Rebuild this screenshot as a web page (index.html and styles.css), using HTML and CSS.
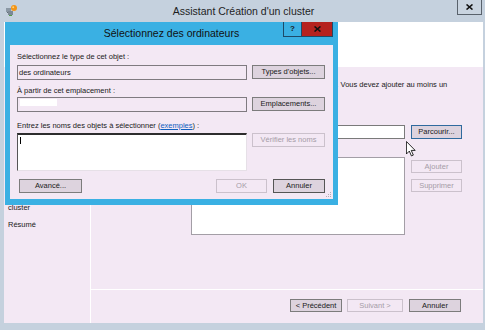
FILE: index.html
```html
<!DOCTYPE html>
<html lang="fr">
<head>
  <meta charset="UTF-8" />
  <meta name="viewport" content="width=device-width, initial-scale=1" />
  <title>Assistant Création d'un cluster</title>
  <link rel="stylesheet" href="styles.css">
</head>
<body>
  <div class="wizard">
    <div class="titlebar">
      <svg class="app-icon" width="12" height="12" viewBox="0 0 12 12">
        <rect x="0" y="4" width="5" height="4" fill="#8b98a5"/>
        <rect x="1" y="8" width="3" height="1" fill="#5f6b76"/>
        <rect x="2" y="7" width="5" height="4" fill="#7c8995"/>
        <rect x="3" y="11" width="3" height="1" fill="#4f9a4a"/>
        <circle cx="8" cy="4" r="3" fill="#f39416"/>
        <circle cx="7.2" cy="3.2" r="1" fill="#ffd27a"/>
      </svg>
      <span class="titlebar-text">Assistant Création d'un cluster</span>
      <button class="win-close" type="button" aria-label="Fermer">
        <svg width="7" height="6" viewBox="0 0 7 6"><path d="M0.5 0.5 L6.5 5.5 M6.5 0.5 L0.5 5.5" stroke="#111" stroke-width="1.6"/></svg>
      </button>
    </div>

    <div class="wizard-client">
      <div class="wizard-header">
        <h2>Sélectionner des serveurs</h2>
      </div>
      <div class="wizard-main">
        <ul class="steps">
          <li>Avant de commencer</li>
          <li class="current">Sélectionner des serveurs</li>
          <li>Avertissement de validation</li>
          <li>Point d'accès pour l'administration du cluster</li>
          <li>Confirmation</li>
          <li>Création du nouveau cluster</li>
          <li>Résumé</li>
        </ul>
        <div class="page">
          <div class="page-content">
            <p class="intro">Ajoutez les noms de tous les serveurs qui doivent faire partie du cluster. Vous devez ajouter au moins un serveur.</p>
            <label class="field-label" for="server">Entrez le nom du serveur :</label>
            <input class="field" id="server" type="text" />
            <button class="focused" type="button">Parcourir...</button>
            <span class="field-label list-label">Serveurs sélectionnés :</span>
            <div class="listbox"></div>
            <div class="list-actions">
              <button type="button" disabled>Ajouter</button>
              <button type="button" disabled>Supprimer</button>
            </div>
          </div>
          <div class="page-footer">
            <button class="btn-prev" type="button">&lt; Précédent</button>
            <button class="btn-next" type="button" disabled>Suivant &gt;</button>
            <button class="btn-cancel" type="button">Annuler</button>
          </div>
        </div>
      </div>
    </div>

    <div class="dialog">
      <div class="dialog-title">
        <span></span>
        <h1>Sélectionnez des ordinateurs</h1>
        <div class="title-buttons">
          <button class="help-btn" type="button">?</button>
          <button class="close-btn" type="button" aria-label="Fermer">
            <svg width="7" height="6" viewBox="0 0 7 6"><path d="M0.5 0.5 L6.5 5.5 M6.5 0.5 L0.5 5.5" stroke="#111" stroke-width="1.6"/></svg>
          </button>
        </div>
      </div>
      <div class="dialog-client">
        <div class="dlg-label first">Sélectionnez le type de cet objet :</div>
        <div class="ro-field">des ordinateurs</div>
        <button type="button">Types d'objets...</button>

        <div class="dlg-label">À partir de cet emplacement :</div>
        <div class="ro-field"><span class="redacted"></span></div>
        <button type="button">Emplacements...</button>

        <div class="dlg-label names">Entrez les noms des objets à sélectionner (<a href="#">exemples</a>) :</div>
        <div class="namebox"></div>
        <button class="check-btn" type="button" disabled>Vérifier les noms</button>

        <div class="dlg-actions">
          <button class="btn-advanced" type="button">Avancé...</button>
          <button class="btn-ok" type="button" disabled>OK</button>
          <button class="btn-dlg-cancel" type="button">Annuler</button>
        </div>

        <svg class="grip" width="6" height="6" viewBox="0 0 6 6">
          <rect x="4" y="0" width="1" height="1" fill="#b4acb6"/>
          <rect x="2" y="2" width="1" height="1" fill="#b4acb6"/>
          <rect x="4" y="2" width="1" height="1" fill="#b4acb6"/>
          <rect x="0" y="4" width="1" height="1" fill="#b4acb6"/>
          <rect x="2" y="4" width="1" height="1" fill="#b4acb6"/>
          <rect x="4" y="4" width="1" height="1" fill="#b4acb6"/>
        </svg>
      </div>
    </div>

    <svg class="cursor" width="10" height="16" viewBox="0 0 12 19">
      <path d="M0.5 0.5 V15.5 L4 12 L6.5 17.8 L8.8 16.8 L6.3 11.2 H11 Z" fill="#fff" stroke="#000" stroke-width="1"/>
    </svg>
  </div>
</body>
</html>
```

FILE: styles.css
```css
* { box-sizing: border-box; }
body { margin: 0; font-family: "Liberation Sans", Arial, sans-serif; font-size: 7.5px; color: #1a1a1a; overflow: hidden; }
button { font: inherit; color: inherit; margin: 0; padding: 0; height: 14px; line-height: 12px; background: #ddd3de; border: 1px solid #7c7c7c; }
button:disabled { background: transparent; border-color: #cbc1cc; color: #a59ca7; }
a { color: #1060c0; }

/* fenêtre de l'assistant */
.wizard { position: relative; width: 485px; height: 330px; padding: 0 2px 7px 4px; background: #c5d1de; display: flex; flex-direction: column; }
.titlebar { flex: none; height: 22px; display: grid; grid-template-columns: 1fr auto 1fr; }
.app-icon { margin: 4px 0 0 2px; }
.titlebar-text { font-size: 10.5px; line-height: 22px; color: #1e1e1e; }
.win-close { justify-self: end; width: 25px; height: 15px; margin-right: 1px; border: 1px solid #59626c; border-top: 0; background: #c9d4e0; display: flex; align-items: center; justify-content: center; }

.wizard-client { flex: 1; display: flex; flex-direction: column; background: #f3e8f4; min-height: 0; }
.wizard-header { flex: none; height: 45px; background: #fff; padding: 10px 12px; }
.wizard-header h2 { margin: 0; font-size: 12px; font-weight: normal; }
.wizard-main { flex: 1; display: flex; min-height: 0; }
.steps { width: 87px; flex: none; list-style: none; margin: 0; padding: 6px 4px 0; border-right: 1px solid #fff; }
.steps li { line-height: 9px; margin-bottom: 8px; }
.steps .current { font-weight: bold; }

.page { flex: 1; display: flex; flex-direction: column; }
.page-content { flex: 1; display: grid; grid-template-columns: 85px 214px 51px; column-gap: 6px; align-content: start; align-items: start; padding: 12.5px 0 0 9px; }
.intro { grid-column: 1 / -1; margin: 0 0 27.5px; line-height: 9px; }
.field-label { line-height: 14px; }
.list-label { margin-top: 4px; }
.field { height: 14px; margin: 0; border: 1px solid #7a7a7a; background: #fff; }
.focused { border-color: #2f6a9e; }
.listbox { height: 78px; margin-top: 4px; background: #fff; border: 1px solid #a39ea6; }
.list-actions { margin-top: 7px; display: flex; flex-direction: column; gap: 6px; }
.list-actions button { height: 13px; }
.page-footer { flex: none; height: 34px; border-top: 1px solid #fff; display: flex; justify-content: flex-end; gap: 5px; padding: 9px 22px 0 0; }
.page-footer button { height: 13px; }
.btn-prev { width: 52px; }
.btn-next { width: 56px; }
.btn-cancel { width: 52px; margin-left: 1px; }

/* boîte de dialogue */
.dialog { position: absolute; left: 5px; top: 22px; width: 333px; height: 183px; padding: 0 5px 6px; background: #3ab0e3; display: flex; flex-direction: column; }
.dialog-title { flex: none; height: 23px; display: grid; grid-template-columns: 1fr auto 1fr; }
.dialog-title h1 { margin: 0; font-size: 10.5px; font-weight: normal; line-height: 23px; color: #111; }
.title-buttons { justify-self: end; display: flex; height: 15px; }
.help-btn { width: 19px; height: 15px; border: 1px solid #1d4a68; border-top: 0; background: #3ab0e3; font-weight: bold; font-size: 8px; }
.close-btn { width: 31px; height: 15px; border: 1px solid #1d4a68; border-left: 0; border-top: 0; background: #b5221f; display: flex; align-items: center; justify-content: center; }

.dialog-client { position: relative; flex: 1; background: #f3e8f4; padding: 7px 8px 0 7px; display: grid; grid-template-columns: 230px 73px; column-gap: 5px; align-content: start; align-items: start; }
.dlg-label { grid-column: 1 / -1; line-height: 9px; margin: 6px 0 2px; }
.dlg-label.first { margin: 0 0 4px; }
.dlg-label.names { margin: 9px 0 3px; }
.ro-field { height: 15px; border: 1px solid #7f7a80; background: #f3e8f4; padding-left: 1px; line-height: 13px; }
.redacted { display: inline-block; width: 37px; height: 7px; margin: 1px 0 0 1px; background: #fff; vertical-align: top; }
.namebox { height: 38px; background: #fff; border-top: 2px solid #2d2d2d; border-left: 1px solid #555; border-right: 1px solid #e6e0e7; border-bottom: 1px solid #e6e0e7; }
.namebox::before { content: ""; display: block; width: 1px; height: 7px; margin: 2px 0 0 2px; background: #000; }
.dlg-actions { grid-column: 1 / -1; display: flex; gap: 6px; margin-top: 8px; }
.btn-advanced { width: 63px; margin-left: 2px; margin-right: auto; }
.btn-ok { width: 51px; }
.btn-dlg-cancel { width: 52px; border-color: #555; }
.grip { position: absolute; right: 1px; bottom: 1px; }

.cursor { position: absolute; left: 406px; top: 141px; }
```
